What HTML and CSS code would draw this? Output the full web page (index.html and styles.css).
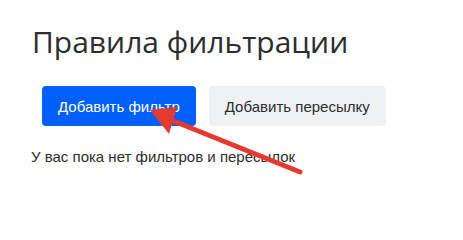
FILE: index.html
```html
<!DOCTYPE html>
<html lang="ru">
<head>
<meta charset="utf-8">
<link rel="stylesheet" href="styles.css">
</head>
<body>
<div class="page">
  <h1 class="title">Правила фильтрации</h1>
  <div class="actions">
    <button class="btn btn-primary">Добавить фильтр</button>
    <button class="btn btn-secondary">Добавить пересылку</button>
  </div>
  <p class="empty">У вас пока нет фильтров и пересылок</p>
  <svg class="arrow" width="463" height="217" viewBox="0 0 463 217">
    <line x1="300" y1="172" x2="166" y2="118" stroke="#e53a2f" stroke-width="5" stroke-linecap="round"/>
    <polygon points="150,110 177,107 169,134" fill="#e53a2f"/>
  </svg>
</div>
</body>
</html>
```
FILE: styles.css
```css
html, body {
  margin: 0;
  padding: 0;
  background: #fff;
}
.page {
  position: relative;
  width: 463px;
  height: 217px;
  padding: 24px 0 0 32px;
  box-sizing: border-box;
  font-family: "Liberation Sans", Arial, sans-serif;
  color: #2c2d2e;
}
.title {
  margin: 0;
  font-family: "Open Sans", sans-serif;
  font-weight: 400;
  font-size: 30px;
  line-height: 36px;
  color: #2c2d2e;
}
.actions {
  display: flex;
  gap: 13px;
  margin: 26px 0 0 10px;
}
.btn {
  height: 40px;
  padding: 0 16px;
  border: none;
  border-radius: 4px;
  font-family: "Liberation Sans", Arial, sans-serif;
  font-size: 15px;
}
.btn-primary {
  background: #005ff9;
  color: #fff;
}
.btn-secondary {
  background: #f0f1f3;
  color: #2c2d2e;
}
.empty {
  margin: 21px 0 0 -1px;
  font-size: 15px;
  line-height: 20px;
}
.arrow {
  position: absolute;
  left: 0;
  top: 0;
  pointer-events: none;
}
```
